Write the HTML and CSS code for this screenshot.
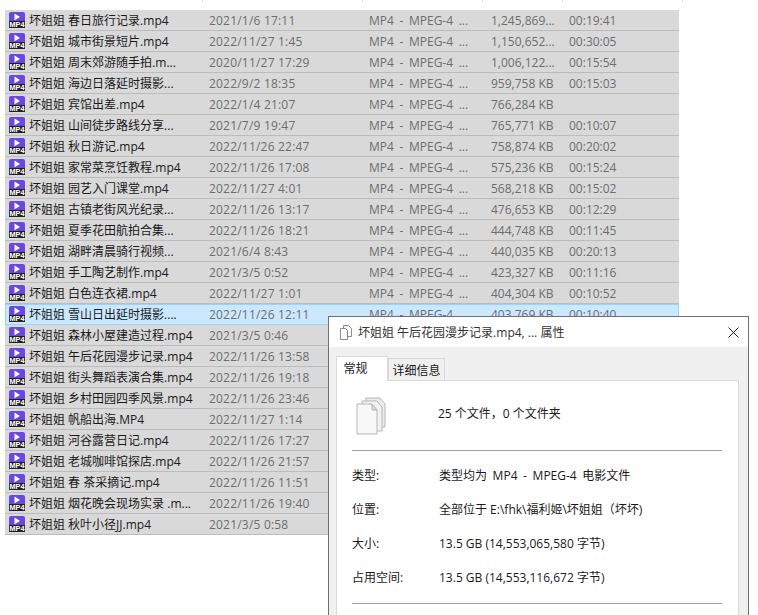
FILE: index.html
```html
<!DOCTYPE html>
<html lang="zh-CN">
<head>
    <meta charset="UTF-8">
    <title>文件列表</title>
    <link rel="stylesheet" href="styles.css">
</head>
<body>
    <svg width="0" height="0" class="defs">
        <symbol id="mp4" viewBox="0 0 16 16">
            <path d="M2 0h12a2 2 0 0 1 2 2v8H0V2a2 2 0 0 1 2-2z" fill="#6a48e0"/>
            <path d="M5.5 1.5l5.5 3.4-5.5 3.4z" fill="#fff"/>
            <rect y="9" width="16" height="7" fill="#222"/>
            <text x="8" y="15.2" textLength="15" lengthAdjust="spacingAndGlyphs" class="mp4-label">MP4</text>
        </symbol>
    </svg>

    <div class="col-head">
        <span></span><span></span><span></span><span></span><span></span>
    </div>

    <div class="file-list">
        <div class="file-row"><svg class="ico"><use href="#mp4"/></svg><span class="name">坏姐姐 春日旅行记录.mp4</span><span>2021/1/6 17:11</span><span>MP4 - MPEG-4 ...</span><span>1,245,869...</span><span>00:19:41</span></div>
        <div class="file-row"><svg class="ico"><use href="#mp4"/></svg><span class="name">坏姐姐 城市街景短片.mp4</span><span>2022/11/27 1:45</span><span>MP4 - MPEG-4 ...</span><span>1,150,652...</span><span>00:30:05</span></div>
        <div class="file-row"><svg class="ico"><use href="#mp4"/></svg><span class="name">坏姐姐 周末郊游随手拍.m...</span><span>2020/11/27 17:29</span><span>MP4 - MPEG-4 ...</span><span>1,006,122...</span><span>00:15:54</span></div>
        <div class="file-row"><svg class="ico"><use href="#mp4"/></svg><span class="name">坏姐姐 海边日落延时摄影...</span><span>2022/9/2 18:35</span><span>MP4 - MPEG-4 ...</span><span>959,758 KB</span><span>00:15:03</span></div>
        <div class="file-row"><svg class="ico"><use href="#mp4"/></svg><span class="name">坏姐姐 宾馆出差.mp4</span><span>2022/1/4 21:07</span><span>MP4 - MPEG-4 ...</span><span>766,284 KB</span><span></span></div>
        <div class="file-row"><svg class="ico"><use href="#mp4"/></svg><span class="name">坏姐姐 山间徒步路线分享...</span><span>2021/7/9 19:47</span><span>MP4 - MPEG-4 ...</span><span>765,771 KB</span><span>00:10:07</span></div>
        <div class="file-row"><svg class="ico"><use href="#mp4"/></svg><span class="name">坏姐姐 秋日游记.mp4</span><span>2022/11/26 22:47</span><span>MP4 - MPEG-4 ...</span><span>758,874 KB</span><span>00:20:02</span></div>
        <div class="file-row"><svg class="ico"><use href="#mp4"/></svg><span class="name">坏姐姐 家常菜烹饪教程.mp4</span><span>2022/11/26 17:08</span><span>MP4 - MPEG-4 ...</span><span>575,236 KB</span><span>00:15:24</span></div>
        <div class="file-row"><svg class="ico"><use href="#mp4"/></svg><span class="name">坏姐姐 园艺入门课堂.mp4</span><span>2022/11/27 4:01</span><span>MP4 - MPEG-4 ...</span><span>568,218 KB</span><span>00:15:02</span></div>
        <div class="file-row"><svg class="ico"><use href="#mp4"/></svg><span class="name">坏姐姐 古镇老街风光纪录...</span><span>2022/11/26 13:17</span><span>MP4 - MPEG-4 ...</span><span>476,653 KB</span><span>00:12:29</span></div>
        <div class="file-row"><svg class="ico"><use href="#mp4"/></svg><span class="name">坏姐姐 夏季花田航拍合集...</span><span>2022/11/26 18:21</span><span>MP4 - MPEG-4 ...</span><span>444,748 KB</span><span>00:11:45</span></div>
        <div class="file-row"><svg class="ico"><use href="#mp4"/></svg><span class="name">坏姐姐 湖畔清晨骑行视频...</span><span>2021/6/4 8:43</span><span>MP4 - MPEG-4 ...</span><span>440,035 KB</span><span>00:20:13</span></div>
        <div class="file-row"><svg class="ico"><use href="#mp4"/></svg><span class="name">坏姐姐 手工陶艺制作.mp4</span><span>2021/3/5 0:52</span><span>MP4 - MPEG-4 ...</span><span>423,327 KB</span><span>00:11:16</span></div>
        <div class="file-row"><svg class="ico"><use href="#mp4"/></svg><span class="name">坏姐姐 白色连衣裙.mp4</span><span>2022/11/27 1:01</span><span>MP4 - MPEG-4 ...</span><span>404,304 KB</span><span>00:10:52</span></div>
        <div class="file-row active"><svg class="ico"><use href="#mp4"/></svg><span class="name">坏姐姐 雪山日出延时摄影....</span><span>2022/11/26 12:11</span><span>MP4 - MPEG-4 ...</span><span>403,769 KB</span><span>00:10:40</span></div>
        <div class="file-row"><svg class="ico"><use href="#mp4"/></svg><span class="name">坏姐姐 森林小屋建造过程.mp4</span><span>2021/3/5 0:46</span></div>
        <div class="file-row"><svg class="ico"><use href="#mp4"/></svg><span class="name">坏姐姐 午后花园漫步记录.mp4</span><span>2022/11/26 13:58</span></div>
        <div class="file-row"><svg class="ico"><use href="#mp4"/></svg><span class="name">坏姐姐 街头舞蹈表演合集.mp4</span><span>2022/11/26 19:18</span></div>
        <div class="file-row"><svg class="ico"><use href="#mp4"/></svg><span class="name">坏姐姐 乡村田园四季风景.mp4</span><span>2022/11/26 23:46</span></div>
        <div class="file-row"><svg class="ico"><use href="#mp4"/></svg><span class="name">坏姐姐 帆船出海.MP4</span><span>2022/11/27 1:14</span></div>
        <div class="file-row"><svg class="ico"><use href="#mp4"/></svg><span class="name">坏姐姐 河谷露营日记.mp4</span><span>2022/11/26 17:27</span></div>
        <div class="file-row"><svg class="ico"><use href="#mp4"/></svg><span class="name">坏姐姐 老城咖啡馆探店.mp4</span><span>2022/11/26 21:57</span></div>
        <div class="file-row"><svg class="ico"><use href="#mp4"/></svg><span class="name">坏姐姐 春 茶采摘记.mp4</span><span>2022/11/26 11:51</span></div>
        <div class="file-row"><svg class="ico"><use href="#mp4"/></svg><span class="name">坏姐姐 烟花晚会现场实录 .m...</span><span>2022/11/26 19:40</span></div>
        <div class="file-row"><svg class="ico"><use href="#mp4"/></svg><span class="name">坏姐姐 秋叶小径JJ.mp4</span><span>2021/3/5 0:58</span></div>
    </div>

    <div class="dialog">
        <div class="title-bar">
            <svg class="title-ico" viewBox="0 0 14 15">
                <path d="M4.5 .5h5l3 3v8h-8z" fill="#fff" stroke="#8a8a8a"/>
                <path d="M1.5 3.5h5l2 2v9h-7z" fill="#fff" stroke="#8a8a8a"/>
            </svg>
            <span class="title-text">坏姐姐 午后花园漫步记录.mp4, ... 属性</span>
            <svg class="close" viewBox="0 0 11 11">
                <path d="M.5 .5l10 10M10.5 .5l-10 10" stroke="#222" fill="none"/>
            </svg>
        </div>
        <div class="dialog-body">
            <div class="tabs">
                <div class="tab current">常规</div>
                <div class="tab">详细信息</div>
            </div>
            <div class="panel">
                <div class="summary">
                    <svg class="files-ico" viewBox="0 0 32 38">
                        <path d="M10 1h14l5 6v23H10z" fill="#ececec" stroke="#b5b5b5"/>
                        <path d="M6 4h15l5 6v24H6z" fill="#f2f2f2" stroke="#b5b5b5"/>
                        <path d="M1 7h15l5 6v24H1z" fill="#f8f8f8" stroke="#b5b5b5"/>
                        <path d="M16 7v6h5z" fill="#dedede" stroke="#b5b5b5"/>
                    </svg>
                    <span class="summary-text">25 个文件，0 个文件夹</span>
                </div>
                <hr class="rule">
                <div class="props">
                    <div class="prop wide"><span>类型:</span><span>类型均为 MP4 - MPEG-4 电影文件</span></div>
                    <div class="prop"><span>位置:</span><span>全部位于 E:\fhk\福利姬\坏姐姐（坏坏)</span></div>
                    <div class="prop"><span>大小:</span><span>13.5 GB (14,553,065,580 字节)</span></div>
                    <div class="prop"><span>占用空间:</span><span>13.5 GB (14,553,116,672 字节)</span></div>
                </div>
                <hr class="rule">
            </div>
        </div>
    </div>
</body>
</html>
```

FILE: styles.css
```css
html, body {
    margin: 0;
    height: 615px;
    overflow: hidden;
    background: #fff;
}
body {
    font-family: "Open Sans", "Noto Sans CJK SC", sans-serif;
    font-size: 12px;
    color: #1a1a1a;
}
.defs {
    display: block;
    height: 0;
}
.mp4-label {
    font-family: "Liberation Sans", sans-serif;
    font-size: 7px;
    font-weight: bold;
    fill: #fff;
    text-anchor: middle;
}

/* explorer column dividers */
.col-head {
    display: flex;
    height: 10px;
    padding-left: 202px;
}
.col-head span {
    height: 3px;
    border-left: 1px solid #e5e5e5;
    width: 159px;
}
.col-head span:nth-child(2) { width: 119px; }
.col-head span:nth-child(3) { width: 79px; }
.col-head span:nth-child(4) { width: 119px; }
.col-head span:nth-child(5) { width: 0; }

.file-list {
    width: 674px;
    margin-left: 5px;
}
.file-row {
    display: grid;
    grid-template-columns: 20px 180px 160px 122px 78px 1fr;
    grid-template-rows: 18px;
    align-items: center;
    box-sizing: border-box;
    height: 21px;
    padding: 2px 0 0 4px;
    background: #d9d9d9;
    border-bottom: 1px solid #bcbcbc;
    color: #6d6d6d;
    white-space: nowrap;
    line-height: 18px;
}
.file-row span:nth-of-type(2) { letter-spacing: .2px; }
.file-row span:nth-of-type(3) { word-spacing: 2.5px; }
.file-row.active {
    background: #cce8ff;
    border: 1px solid #99d1ff;
    padding: 1px 0 0 3px;
}
.ico {
    width: 16px;
    height: 16px;
    align-self: start;
}
.name {
    color: #1a1a1a;
}

.dialog {
    position: absolute;
    left: 328px;
    top: 316px;
    width: 421px;
    height: 320px;
    box-sizing: border-box;
    border: 1px solid #6f6f6f;
    background: #f0f0f0;
}
.title-bar {
    display: flex;
    align-items: center;
    height: 30px;
    padding: 0 10px;
    background: #fff;
}
.title-ico {
    width: 14px;
    height: 15px;
}
.title-text {
    flex: 1;
    margin-left: 5px;
    color: #333;
}
.close {
    width: 11px;
    height: 11px;
    margin-right: -1px;
}
.dialog-body {
    padding: 9px 9px 0 7px;
}
.tabs {
    display: flex;
    align-items: flex-end;
    height: 24px;
}
.tab {
    box-sizing: border-box;
    height: 22px;
    width: 57px;
    border: 1px solid #d9d9d9;
    border-bottom: 0;
    text-align: center;
    line-height: 23px;
    background: #f0f0f0;
}
.tab.current {
    position: relative;
    height: 25px;
    width: 52px;
    margin-bottom: -1px;
    background: #fff;
    padding-right: 13px;
    z-index: 1;
}
.panel {
    height: 260px;
    box-sizing: border-box;
    padding: 0 16px 0 15px;
    background: #fff;
    border: 1px solid #d9d9d9;
}
.summary {
    display: flex;
    align-items: center;
    gap: 50px;
    height: 69px;
    padding-left: 4px;
}
.files-ico {
    width: 32px;
    height: 38px;
}
.summary-text {
    padding-bottom: 6px;
}
.rule {
    margin: 0;
    border: 0;
    border-top: 1px solid #a0a0a0;
}
.props {
    padding: 7px 0 9px;
}
.prop {
    display: grid;
    grid-template-columns: 87px 1fr;
    align-items: center;
    height: 34px;
}
.prop.wide {
    word-spacing: 2.5px;
}
```
